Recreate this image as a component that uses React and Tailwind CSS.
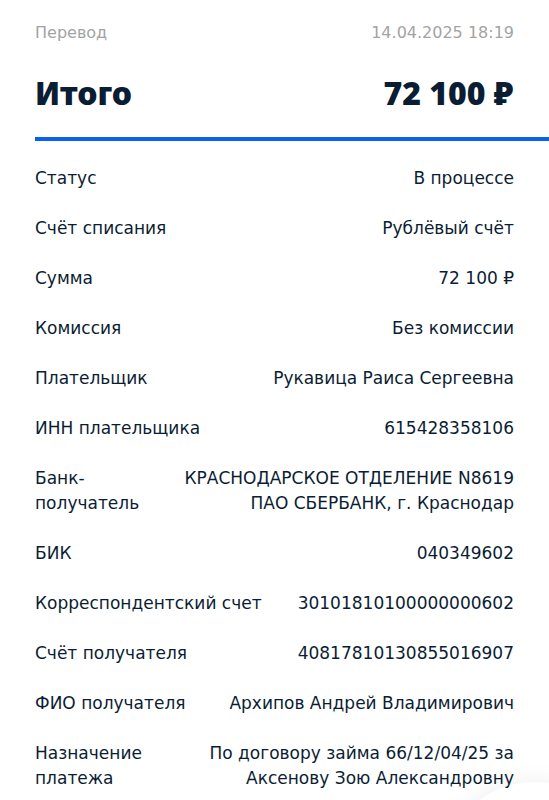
import React from "react";

const rows = [
  ["Статус", "В процессе"],
  ["Счёт списания", "Рублёвый счёт"],
  ["Сумма", "72 100 ₽"],
  ["Комиссия", "Без комиссии"],
  ["Плательщик", "Рукавица Раиса Сергеевна"],
  ["ИНН плательщика", "615428358106"],
  [["Банк-", "получатель"], ["КРАСНОДАРСКОЕ ОТДЕЛЕНИЕ N8619", "ПАО СБЕРБАНК, г. Краснодар"]],
  ["БИК", "040349602"],
  ["Корреспондентский счет", "30101810100000000602"],
  ["Счёт получателя", "40817810130855016907"],
  ["ФИО получателя", "Архипов Андрей Владимирович"],
  [["Назначение", "платежа"], ["По договору займа 66/12/04/25 за", "Аксенову Зою Александровну"]],
];

function Lines({ v }) {
  if (Array.isArray(v)) return v.map((l, i) => <div key={i}>{l}</div>);
  return <div>{v}</div>;
}

export default function App() {
  return (
    <div
      className="relative w-[549px] h-[800px] overflow-hidden bg-white pl-[35px]"
      style={{ fontFamily: '"DejaVu Sans", "Noto Sans", sans-serif' }}
    >
      <div className="absolute left-[440px] top-[782px] w-[190px] h-[190px] rounded-full bg-white shadow-[0_0_22px_rgba(0,0,0,0.07)]" />
      <div className="relative">
        <div className="flex justify-between pr-[35px] pt-[21px] text-[16px] leading-[24px] text-[#a3a3a3]">
          <span>Перевод</span>
          <span>14.04.2025 18:19</span>
        </div>
        <div
          className="flex justify-between pr-[35px] mt-[36px] text-[32px] leading-[24px] font-black text-[#0b1d33]"
          style={{ fontFamily: '"Noto Sans", sans-serif' }}
        >
          <span>Итого</span>
          <span>72 100 ₽</span>
        </div>
        <div className="mt-[32px] h-[4px] bg-[#0a5ff2]" />
        <div className="flex flex-col gap-[25px] pr-[35px] pt-[25px] text-[17px] leading-[25px] text-[#0b1d33]">
          {rows.map(([l, v], i) => (
            <div key={i} className="flex justify-between gap-6 whitespace-nowrap">
              <div className="text-left"><Lines v={l} /></div>
              <div className="text-right"><Lines v={v} /></div>
            </div>
          ))}
        </div>
      </div>
    </div>
  );
}
